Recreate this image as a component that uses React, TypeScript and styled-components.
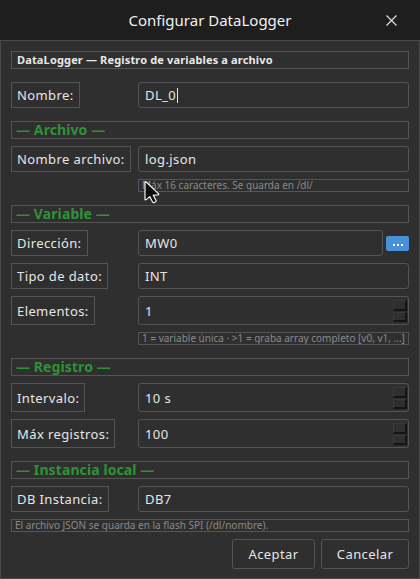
import React from "react";
import styled, { createGlobalStyle } from "styled-components";

const Global = createGlobalStyle`
  html, body { margin: 0; padding: 0; background: #2f2f2f; }
  body { font-family: "Noto Sans", "Open Sans", sans-serif; }
`;

const Window = styled.div`
  width: 420px;
  height: 579px;
  display: flex;
  flex-direction: column;
  background: #1e1e1e;
  color: #e6e6e6;
  position: relative;
  overflow: hidden;
`;

const TitleBar = styled.div`
  height: 40px;
  display: flex;
  align-items: center;
  justify-content: center;
  position: relative;
  font-size: 15px;
  color: #f0f0f0;
`;

const CloseBtn = styled.div`
  position: absolute;
  right: 23px;
  top: 15px;
  width: 11px;
  height: 11px;
  display: flex;
`;

const Body = styled.div`
  flex: 1;
  background: #2f2f2f;
  border: 1px solid #4a4a4a;
  padding: 10px 10px 0 10px;
  display: flex;
  flex-direction: column;
  gap: 7px;
`;

const Banner = styled.div`
  border: 1px solid #555;
  height: 16px;
  font-size: 11px;
  font-weight: 700;
  line-height: 16px;
  padding: 0 5px;
  margin-bottom: 6px;
  color: #e8e8e8;
  letter-spacing: 0.15px;
`;

const Section = styled.div`
  border: 1px solid #555;
  height: 16px;
  line-height: 16px;
  font-size: 14px;
  font-weight: 700;
  letter-spacing: 0.1px;
  padding: 0 4px;
  color: #2e9236;
  margin-top: 6px;
`;

const Row = styled.div<{ tall?: boolean }>`
  display: grid;
  grid-template-columns: 120px 1fr;
  column-gap: 7px;
  height: ${(p) => (p.tall ? "29px" : "26px")};
`;

const Label = styled.div`
  justify-self: start;
  border: 1px solid #555;
  padding: 0 5px;
  display: flex;
  align-items: center;
  font-size: 13px;
  letter-spacing: 0.4px;
  white-space: nowrap;
`;

const FieldWrap = styled.div`
  display: flex;
  align-items: center;
  gap: 3px;
`;

const Input = styled.div`
  flex: 1;
  align-self: stretch;
  border: 1px solid #555;
  border-radius: 3px;
  display: flex;
  align-items: center;
  padding: 0 6px;
  font-size: 13px;
  letter-spacing: 0.4px;
  position: relative;
`;

const Caret = styled.span`
  display: inline-block;
  width: 1px;
  height: 15px;
  background: #e6e6e6;
  margin-left: 1px;
`;

const DotsBtn = styled.div`
  width: 23px;
  height: 15px;
  background: #4a90d9;
  border-radius: 2px;
  display: flex;
  align-items: center;
  justify-content: center;
  gap: 2px;
  padding-top: 3px;
  box-sizing: border-box;
`;

const Dot = styled.span`
  width: 2px;
  height: 2px;
  background: #fff;
`;

const Spinner = styled.div`
  position: absolute;
  right: 1px;
  top: 3px;
  bottom: 2px;
  width: 14px;
  display: flex;
  flex-direction: column;
  gap: 1px;
`;

const SpinHalf = styled.div`
  flex: 1;
  background: #2f2f2f;
  border: 1px solid #3a3a3a;
  border-right: 2px solid #141414;
  border-bottom: 2px solid #141414;
`;

const HintRow = styled.div`
  display: grid;
  grid-template-columns: 120px 1fr;
  column-gap: 7px;
`;

const Hint = styled.div<{ full?: boolean }>`
  grid-column: ${(p) => (p.full ? "1 / -1" : "2")};
  border: 1px solid #555;
  height: 11px;
  line-height: 11px;
  font-size: 10px;
  color: #8a8a8a;
  padding: 0 3px;
  white-space: nowrap;
  overflow: hidden;
`;

const Footer = styled.div`
  display: flex;
  justify-content: flex-end;
  gap: 6px;
`;

const Button = styled.div<{ w: number }>`
  width: ${(p) => p.w}px;
  height: 30px;
  box-sizing: border-box;
  border: 1px solid #555;
  border-radius: 3px;
  display: flex;
  align-items: center;
  justify-content: center;
  font-size: 13px;
  letter-spacing: 0.4px;
  color: #e6e6e6;
`;

const Cursor = styled.svg`
  position: absolute;
  left: 143px;
  top: 181px;
`;

const Spin = () => (
  <Spinner>
    <SpinHalf />
    <SpinHalf />
  </Spinner>
);

export default function App() {
  return (
    <Window>
      <Global />
      <TitleBar>
        Configurar DataLogger
        <CloseBtn>
          <svg width="11" height="11" viewBox="0 0 11 11">
            <path d="M0.5 0.5 L10.5 10.5 M10.5 0.5 L0.5 10.5" stroke="#e6e6e6" strokeWidth="1.1" />
          </svg>
        </CloseBtn>
      </TitleBar>
      <Body>
        <Banner>DataLogger — Registro de variables a archivo</Banner>

        <Row>
          <Label>Nombre:</Label>
          <FieldWrap>
            <Input>
              DL_0<Caret />
            </Input>
          </FieldWrap>
        </Row>

        <Section>— Archivo —</Section>
        <Row>
          <Label>Nombre archivo:</Label>
          <FieldWrap>
            <Input>log.json</Input>
          </FieldWrap>
        </Row>
        <HintRow>
          <Hint>Máx 16 caracteres. Se guarda en /dl/</Hint>
        </HintRow>

        <Section>— Variable —</Section>
        <Row>
          <Label>Dirección:</Label>
          <FieldWrap>
            <Input>MW0</Input>
            <DotsBtn>
              <Dot />
              <Dot />
              <Dot />
            </DotsBtn>
          </FieldWrap>
        </Row>
        <Row>
          <Label>Tipo de dato:</Label>
          <FieldWrap>
            <Input>INT</Input>
          </FieldWrap>
        </Row>
        <Row tall>
          <Label>Elementos:</Label>
          <FieldWrap>
            <Input>
              1
              <Spin />
            </Input>
          </FieldWrap>
        </Row>
        <HintRow>
          <Hint>1 = variable única · &gt;1 = graba array completo [v0, v1, ...]</Hint>
        </HintRow>

        <Section>— Registro —</Section>
        <Row tall>
          <Label>Intervalo:</Label>
          <FieldWrap>
            <Input>
              10 s
              <Spin />
            </Input>
          </FieldWrap>
        </Row>
        <Row tall>
          <Label>Máx registros:</Label>
          <FieldWrap>
            <Input>
              100
              <Spin />
            </Input>
          </FieldWrap>
        </Row>

        <Section>— Instancia local —</Section>
        <Row>
          <Label>DB Instancia:</Label>
          <FieldWrap>
            <Input>DB7</Input>
          </FieldWrap>
        </Row>
        <HintRow>
          <Hint full>El archivo JSON se guarda en la flash SPI (/dl/nombre).</Hint>
        </HintRow>

        <Footer>
          <Button w={83}>Aceptar</Button>
          <Button w={88}>Cancelar</Button>
        </Footer>
      </Body>
      <Cursor width="18" height="23" viewBox="0 0 18 23">
        <path
          d="M2 1.5 L2 18 Q2 19.5 3.2 18.6 L6.8 15.6 L9.6 21 Q10.2 22 11.2 21.5 L12.6 20.8 Q13.4 20.3 13 19.4 L10.3 14.2 L15 13.8 Q16.4 13.6 15.4 12.6 L3.2 1 Q2 0 2 1.5 Z"
          fill="#0c0c0c"
          stroke="#f4f4f4"
          strokeWidth="1.2"
        />
      </Cursor>
    </Window>
  );
}
